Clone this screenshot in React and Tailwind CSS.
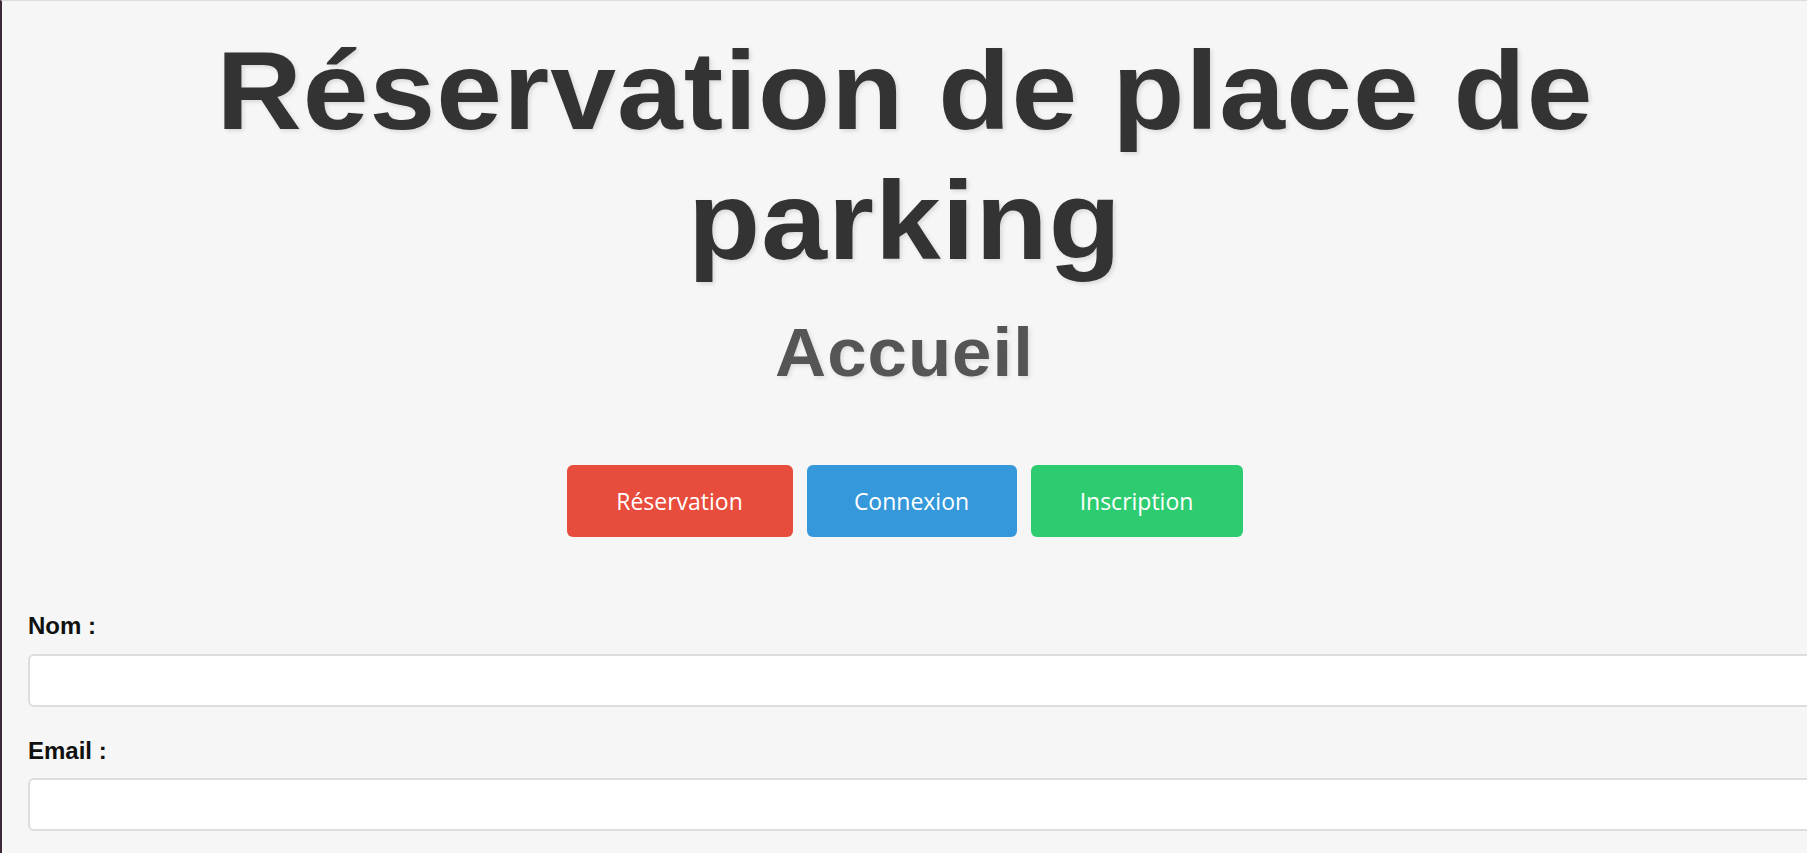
import React from 'react'

const buttons = [
  { label: 'Réservation', className: 'w-[226px] bg-[#e74c3c]' },
  { label: 'Connexion', className: 'w-[210px] bg-[#3498db]' },
  { label: 'Inscription', className: 'w-[212px] bg-[#2ecc71]' },
]

const fields = [
  { id: 'nom', label: 'Nom :', type: 'text' },
  { id: 'email', label: 'Email :', type: 'email' },
]

export default function App() {
  return (
    <div className="h-[853px] w-full overflow-hidden bg-[#f6f6f6] border-t border-[#dcdcdc] border-l-2 border-l-[#3b2a38] font-['Liberation_Sans',Arial,sans-serif]">
      {/* Header */}
      <header className="flex flex-col items-center pt-[25px] text-center">
        <h1 className="w-[1340px] scale-x-[1.055] text-[112px] font-bold leading-[130px] tracking-[1px] text-[#333333] [text-shadow:2px_2px_4px_rgba(0,0,0,0.12)]">
          Réservation de place de parking
        </h1>
        <h2 className="mt-[15px] scale-x-[1.04] text-[68px] font-bold tracking-[1px] text-[#555555] [text-shadow:2px_2px_4px_rgba(0,0,0,0.1)]">
          Accueil
        </h2>
      </header>

      {/* Navigation */}
      <nav className="mt-[62px] flex justify-center gap-[14px]">
        {buttons.map((b) => (
          <button
            key={b.label}
            className={`${b.className} h-[72px] rounded-[6px] text-[23px] text-white font-['Open_Sans',sans-serif]`}
          >
            {b.label}
          </button>
        ))}
      </nav>

      {/* Form */}
      <form className="mt-[75px] flex flex-col gap-[30px] pl-[26px]">
        {fields.map((f) => (
          <div key={f.id} className="flex flex-col gap-[14px]">
            <label htmlFor={f.id} className="text-[24px] leading-[27.6px] font-bold text-[#111111]">
              {f.label}
            </label>
            <input
              id={f.id}
              type={f.type}
              className="h-[53px] w-[1800px] shrink-0 rounded-[6px] border-2 border-[#dddddd] bg-white px-3"
            />
          </div>
        ))}
      </form>
    </div>
  )
}
